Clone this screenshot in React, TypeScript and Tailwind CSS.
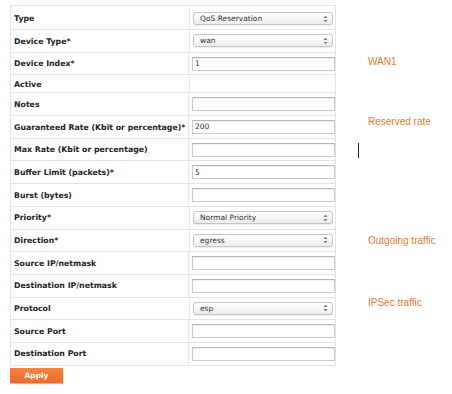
const rows: { label: string; kind: 'select' | 'input' | 'none'; value?: string; note?: string; noteClass?: string; cursor?: boolean }[] = [
  { label: 'Type', kind: 'select', value: 'QoS Reservation' },
  { label: 'Device Type*', kind: 'select', value: 'wan' },
  { label: 'Device Index*', kind: 'input', value: '1', note: 'WAN1', noteClass: '-mt-[5px]' },
  { label: 'Active', kind: 'none' },
  { label: 'Notes', kind: 'input' },
  { label: 'Guaranteed Rate (Kbit or percentage)*', kind: 'input', value: '200', note: 'Reserved rate', noteClass: '-mt-[12px]' },
  { label: 'Max Rate (Kbit or percentage)', kind: 'input', cursor: true },
  { label: 'Buffer Limit (packets)*', kind: 'input', value: '5' },
  { label: 'Burst (bytes)', kind: 'input' },
  { label: 'Priority*', kind: 'select', value: 'Normal Priority' },
  { label: 'Direction*', kind: 'select', value: 'egress', note: 'Outgoing traffic' },
  { label: 'Source IP/netmask', kind: 'input' },
  { label: 'Destination IP/netmask', kind: 'input' },
  { label: 'Protocol', kind: 'select', value: 'esp', note: 'IPSec traffic', noteClass: '-mt-[12px]' },
  { label: 'Source Port', kind: 'input' },
  { label: 'Destination Port', kind: 'input' },
]

function Select({ value }: { value: string }) {
  return (
    <div className="flex h-[13px] w-[140px] items-center justify-between rounded-[3px] border border-[#c4c4c4] bg-gradient-to-b from-white to-[#ececec] pl-[6px] pr-[4px] text-[7.5px] text-[#333] shadow-[0_1px_1px_rgba(0,0,0,0.08)]">
      <span>{value}</span>
      <svg width="5" height="8" viewBox="0 0 5 8">
        <path d="M0.5 3L2.5 0.8L4.5 3Z" fill="#777" />
        <path d="M0.5 5L2.5 7.2L4.5 5Z" fill="#777" />
      </svg>
    </div>
  )
}

function Input({ value }: { value?: string }) {
  return (
    <div className="flex h-[14px] w-[143px] items-center border border-[#c9c9c9] border-t-[#b5b5b5] bg-white pl-[2px] text-[7.5px] text-[#333] shadow-[inset_0_1px_1px_rgba(0,0,0,0.06)]">
      {value}
    </div>
  )
}

export default function App() {
  return (
    <div className="h-[394px] w-[452px] bg-white pt-[5px] font-['DejaVu_Sans',sans-serif]">
      <div className="flex flex-col">
        {rows.map((r, i) => (
          <div key={r.label} className="flex">
            <div
              className={`ml-[10px] flex w-[326px] border-x border-b border-[#e3e3e3] ${i === 0 ? 'h-[25px] border-t pt-[2px]' : r.kind === 'none' ? 'h-[18px]' : 'h-[22.7px]'}`}
            >
              <div className="flex w-[179px] items-center border-r border-[#e8e8e8] pl-[3px] pt-[1px] text-[7.8px] font-bold text-[#222]">
                {r.label}
              </div>
              <div className="flex flex-1 items-center pl-[3px]">
                {r.kind === 'select' && <Select value={r.value ?? ''} />}
                {r.kind === 'input' && <Input value={r.value} />}
              </div>
            </div>
            <div className="flex flex-1 items-center">
              {r.cursor && <div className="ml-[22px] h-[15px] w-px bg-[#222]" />}
              {r.note && (
                <span className={`ml-[32px] font-['Liberation_Sans',sans-serif] text-[10px] text-[#e8792b] ${r.noteClass ?? ''}`}>
                  {r.note}
                </span>
              )}
            </div>
          </div>
        ))}
      </div>
      <button className="ml-[10px] mt-[2px] flex h-[15px] w-[53px] items-center justify-center bg-gradient-to-b from-[#f5843f] to-[#ee6a25] text-[7.5px] font-bold text-white shadow-[0_1px_1px_rgba(0,0,0,0.25)]">
        Apply
      </button>
    </div>
  )
}
